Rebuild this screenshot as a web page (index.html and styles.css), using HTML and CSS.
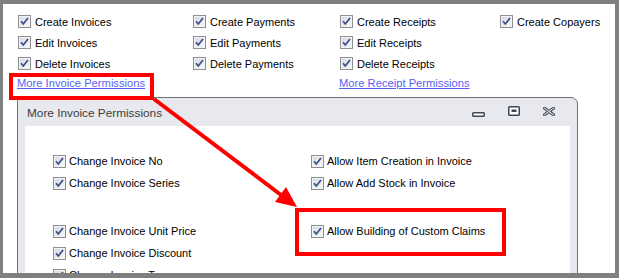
FILE: index.html
```html
<!DOCTYPE html>
<html>
<head>
<meta charset="utf-8">
<link rel="stylesheet" href="styles.css">
</head>
<body>
<div class="shot">
  <div class="frame">
    <div class="perms">
      <div class="item"><span class="cb"><svg viewBox="0 0 11 11"><path d="M2 5.2 L4.3 8 L9 2"/></svg></span><span>Create Invoices</span></div>
      <div class="item"><span class="cb"><svg viewBox="0 0 11 11"><path d="M2 5.2 L4.3 8 L9 2"/></svg></span><span>Create Payments</span></div>
      <div class="item"><span class="cb"><svg viewBox="0 0 11 11"><path d="M2 5.2 L4.3 8 L9 2"/></svg></span><span>Create Receipts</span></div>
      <div class="item"><span class="cb"><svg viewBox="0 0 11 11"><path d="M2 5.2 L4.3 8 L9 2"/></svg></span><span>Create Copayers</span></div>
      <div class="item"><span class="cb"><svg viewBox="0 0 11 11"><path d="M2 5.2 L4.3 8 L9 2"/></svg></span><span>Edit Invoices</span></div>
      <div class="item"><span class="cb"><svg viewBox="0 0 11 11"><path d="M2 5.2 L4.3 8 L9 2"/></svg></span><span>Edit Payments</span></div>
      <div class="item"><span class="cb"><svg viewBox="0 0 11 11"><path d="M2 5.2 L4.3 8 L9 2"/></svg></span><span>Edit Receipts</span></div>
      <div class="item empty"></div>
      <div class="item"><span class="cb"><svg viewBox="0 0 11 11"><path d="M2 5.2 L4.3 8 L9 2"/></svg></span><span>Delete Invoices</span></div>
      <div class="item"><span class="cb"><svg viewBox="0 0 11 11"><path d="M2 5.2 L4.3 8 L9 2"/></svg></span><span>Delete Payments</span></div>
      <div class="item"><span class="cb"><svg viewBox="0 0 11 11"><path d="M2 5.2 L4.3 8 L9 2"/></svg></span><span>Delete Receipts</span></div>
    </div>
    <div class="links">
      <a class="link" href="#">More Invoice Permissions</a>
      <span></span>
      <a class="link" href="#">More Receipt Permissions</a>
    </div>
    <div class="dialog">
      <div class="titlebar">
        <span class="title">More Invoice Permissions</span>
        <div class="ctrls">
          <svg class="min" width="13" height="5" viewBox="0 0 13 5"><rect x="0.75" y="0.75" width="11.5" height="3.5" rx="0.8" fill="#fff" stroke="#3f4656" stroke-width="1.5"/></svg>
          <svg class="max" width="12" height="10" viewBox="0 0 12 10"><rect x="0.75" y="0.75" width="10.5" height="8.5" rx="0.8" fill="#fff" stroke="#3f4656" stroke-width="1.5"/><rect x="3.5" y="3.5" width="5" height="2.5" fill="#3f4656"/></svg>
          <svg class="close" width="12" height="9" viewBox="0 0 12 9"><path d="M1.5 1.2 L10.5 7.8 M10.5 1.2 L1.5 7.8" stroke="#4b5160" stroke-width="3" stroke-linecap="square"/><path d="M1.5 1.2 L10.5 7.8 M10.5 1.2 L1.5 7.8" stroke="#f3f4f6" stroke-width="1" stroke-linecap="square"/></svg>
        </div>
      </div>
      <div class="body">
        <div class="col left">
          <div class="row"><span class="cb"><svg viewBox="0 0 11 11"><path d="M2 5.2 L4.3 8 L9 2"/></svg></span><span>Change Invoice No</span></div>
          <div class="row"><span class="cb"><svg viewBox="0 0 11 11"><path d="M2 5.2 L4.3 8 L9 2"/></svg></span><span>Change Invoice Series</span></div>
          <div class="row gap"><span class="cb"><svg viewBox="0 0 11 11"><path d="M2 5.2 L4.3 8 L9 2"/></svg></span><span>Change Invoice Unit Price</span></div>
          <div class="row"><span class="cb"><svg viewBox="0 0 11 11"><path d="M2 5.2 L4.3 8 L9 2"/></svg></span><span>Change Invoice Discount</span></div>
          <div class="row"><span class="cb"><svg viewBox="0 0 11 11"><path d="M2 5.2 L4.3 8 L9 2"/></svg></span><span>Change Invoice Terms</span></div>
        </div>
        <div class="col right">
          <div class="row"><span class="cb"><svg viewBox="0 0 11 11"><path d="M2 5.2 L4.3 8 L9 2"/></svg></span><span>Allow Item Creation in Invoice</span></div>
          <div class="row"><span class="cb"><svg viewBox="0 0 11 11"><path d="M2 5.2 L4.3 8 L9 2"/></svg></span><span>Allow Add Stock in Invoice</span></div>
          <div class="row gap"><span class="cb"><svg viewBox="0 0 11 11"><path d="M2 5.2 L4.3 8 L9 2"/></svg></span><span>Allow Building of Custom Claims</span></div>
        </div>
      </div>
    </div>
  </div>
  <svg class="annot" width="619" height="278" viewBox="0 0 619 278">
    <rect x="11" y="75" width="141" height="23" fill="none" stroke="#ff0000" stroke-width="4"/>
    <rect x="297" y="210" width="207" height="44" fill="none" stroke="#ff0000" stroke-width="4"/>
    <line x1="154" y1="99" x2="281" y2="195" stroke="#ff0000" stroke-width="4"/>
    <polygon points="297,207 275,202 286,187" fill="#ff0000"/>
  </svg>
</div>
</body>
</html>
```
FILE: styles.css
```css
html, body {
  margin: 0;
  padding: 0;
  background: #ffffff;
}

.shot {
  position: relative;
  width: 619px;
  height: 278px;
  overflow: hidden;
  font-family: "Liberation Sans", Arial, sans-serif;
  font-size: 11px;
  color: #000;
}

.frame {
  box-sizing: border-box;
  width: 619px;
  height: 278px;
  border-style: solid;
  border-color: #7f7f7f;
  border-width: 4px 4px 5px 3px;
  background: #ffffff;
  overflow: hidden;
}

.perms {
  display: grid;
  grid-template-columns: 175px 147px 160px auto;
  grid-auto-rows: 21px;
  padding: 7px 0 0 15px;
}

.item {
  display: flex;
  align-items: center;
  gap: 4px;
  white-space: nowrap;
}

.cb {
  box-sizing: border-box;
  flex: none;
  width: 13px;
  height: 13px;
  border: 1px solid #8e8f8f;
  background: linear-gradient(135deg, #d3d7de 0%, #eef0f3 70%, #f8f8f8 100%);
  box-shadow: inset 0 0 0 1px #f2f3f5;
  display: block;
}

.cb svg {
  display: block;
  width: 11px;
  height: 11px;
}

.cb path {
  fill: none;
  stroke: #3b4e8c;
  stroke-width: 1.7;
}

.links {
  display: grid;
  grid-template-columns: 175px 147px auto;
  padding-left: 14px;
  margin-top: 3px;
  height: 13px;
  line-height: 13px;
}

.link {
  color: #5b5ff0;
  text-decoration: underline;
  white-space: nowrap;
  font-size: 11.2px;
}

.dialog {
  box-sizing: border-box;
  margin: 7px 0 0 14px;
  width: 561px;
  height: 300px;
  border: 1px solid #6f7175;
  border-radius: 2px 7px 0 0;
  background: #e7e9ee;
  display: flex;
  flex-direction: column;
}

.titlebar {
  height: 28px;
  display: flex;
  align-items: center;
  padding: 2px 22px 0 9px;
  box-sizing: border-box;
}

.title {
  font-size: 11.8px;
  color: #3d3d3d;
  white-space: nowrap;
}

.ctrls {
  margin-left: auto;
  display: flex;
  align-items: flex-start;
  height: 10px;
  margin-top: -2px;
}

.ctrls svg {
  display: block;
}

.min {
  margin-top: 5px;
}

.max {
  margin-left: 23px;
  margin-top: -1px;
}

.close {
  margin-left: 23px;
}

.body {
  flex: 1;
  margin: 0 7px;
  background: #ffffff;
  display: flex;
  padding: 24px 0 0 28px;
}

.col {
  display: flex;
  flex-direction: column;
}

.col.left {
  width: 258px;
}

.row {
  display: flex;
  align-items: center;
  gap: 3px;
  height: 22px;
  white-space: nowrap;
}

.row.gap {
  margin-top: 26px;
}

.annot {
  position: absolute;
  left: 0;
  top: 0;
}
```
